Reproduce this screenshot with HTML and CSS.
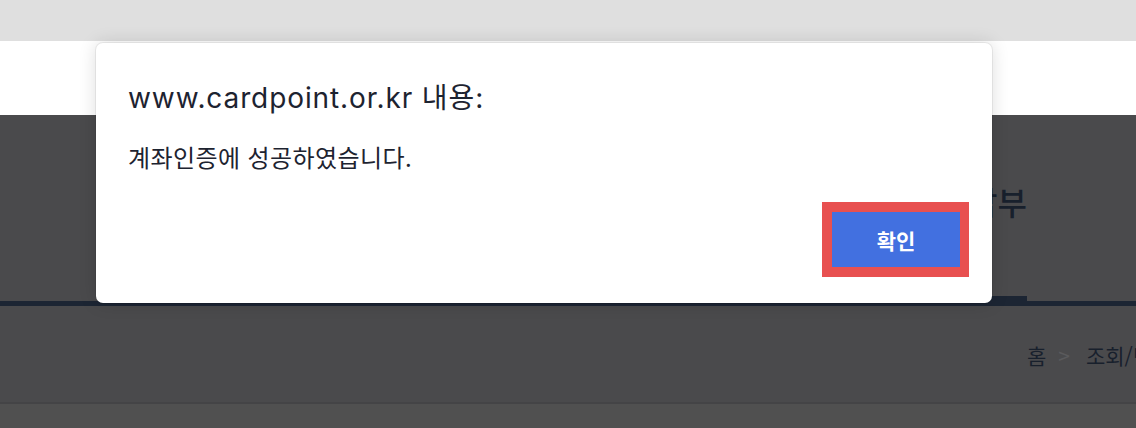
FILE: index.html
```html
<!DOCTYPE html>
<html lang="ko">
<head>
<meta charset="utf-8">
<title>cardpoint</title>
<link rel="stylesheet" href="styles.css">
</head>
<body>
<div class="tabbar"></div>
<div class="header"></div>
<div class="content">
  <div class="title-row">
    <h2 class="page-title">조회/납부</h2>
  </div>
  <div class="rule"></div>
  <div class="crumb-row">
    <div class="crumbs"><span>홈</span><span class="sep">&gt;</span><span>조회/변경</span></div>
  </div>
  <div class="bottom"></div>
</div>

<div class="dialog" role="alertdialog">
  <div class="dialog-title">www.cardpoint.or.kr 내용:</div>
  <div class="dialog-msg">계좌인증에 성공하였습니다.</div>
  <div class="dialog-actions">
    <div class="focus-ring"><button class="ok">확인</button></div>
  </div>
</div>
</body>
</html>
```

FILE: styles.css
```css
* { box-sizing: border-box; }
html, body { margin: 0; padding: 0; }
body {
  width: 1136px;
  height: 428px;
  overflow: hidden;
  position: relative;
  font-family: "Inter", "Noto Sans CJK KR", sans-serif;
  background: #4a4a4c;
}
.tabbar { height: 41px; background: #dfdfdf; }
.header { height: 74px; background: #ffffff; }
.content { background: #4a4a4c; }
.title-row {
  height: 186px;
  display: flex;
  justify-content: flex-end;
  align-items: flex-end;
  padding-right: 109px;
}
.page-title {
  margin: 0;
  font-family: "Noto Sans CJK KR", sans-serif;
  font-weight: 500;
  font-size: 32px;
  line-height: 1;
  color: #18202c;
  padding-bottom: 79px;
  border-bottom: 5px solid #1c2533;
  white-space: nowrap;
}
.rule { height: 5px; background: #1c2533; }
.crumb-row {
  height: 98px;
  border-bottom: 2px solid #444446;
  display: flex;
  padding-left: 1027px;
  padding-top: 36px;
  overflow: hidden;
}
.crumbs {
  display: flex;
  gap: 12px;
  font-family: "Noto Sans CJK KR", sans-serif;
  font-size: 21px;
  line-height: 26px;
  color: #18202c;
  white-space: nowrap;
}
.crumbs .sep { color: #5a5a5c; margin-right: 4px; }
.bottom { height: 40px; background: #505050; }

.dialog {
  position: absolute;
  left: 96px;
  top: 43px;
  width: 896px;
  height: 260px;
  background: #ffffff;
  border-radius: 7px;
  box-shadow: 0 0 18px rgba(0,0,0,0.14), 0 0 0 1px rgba(0,0,0,0.06);
  padding: 38px 23px 0 32px;
  display: flex;
  flex-direction: column;
}
.dialog-title {
  font-size: 28px;
  line-height: 34px;
  color: #1d2330;
  letter-spacing: 0.9px;
}
.dialog-msg {
  margin-top: 26px;
  font-family: "Noto Sans CJK KR", sans-serif;
  font-size: 24px;
  line-height: 32px;
  color: #1d2330;
  letter-spacing: 0.4px;
}
.dialog-actions {
  display: flex;
  justify-content: flex-end;
  margin-top: 29px;
}
.focus-ring {
  background: #e85050;
  padding: 10px 9px 10px 10px;
}
.ok {
  display: block;
  width: 128px;
  height: 55px;
  border: 0;
  background: #4270e0;
  color: #ffffff;
  font-family: "Noto Sans CJK KR", sans-serif;
  font-weight: 700;
  font-size: 21px;
  padding: 0;
}
```
